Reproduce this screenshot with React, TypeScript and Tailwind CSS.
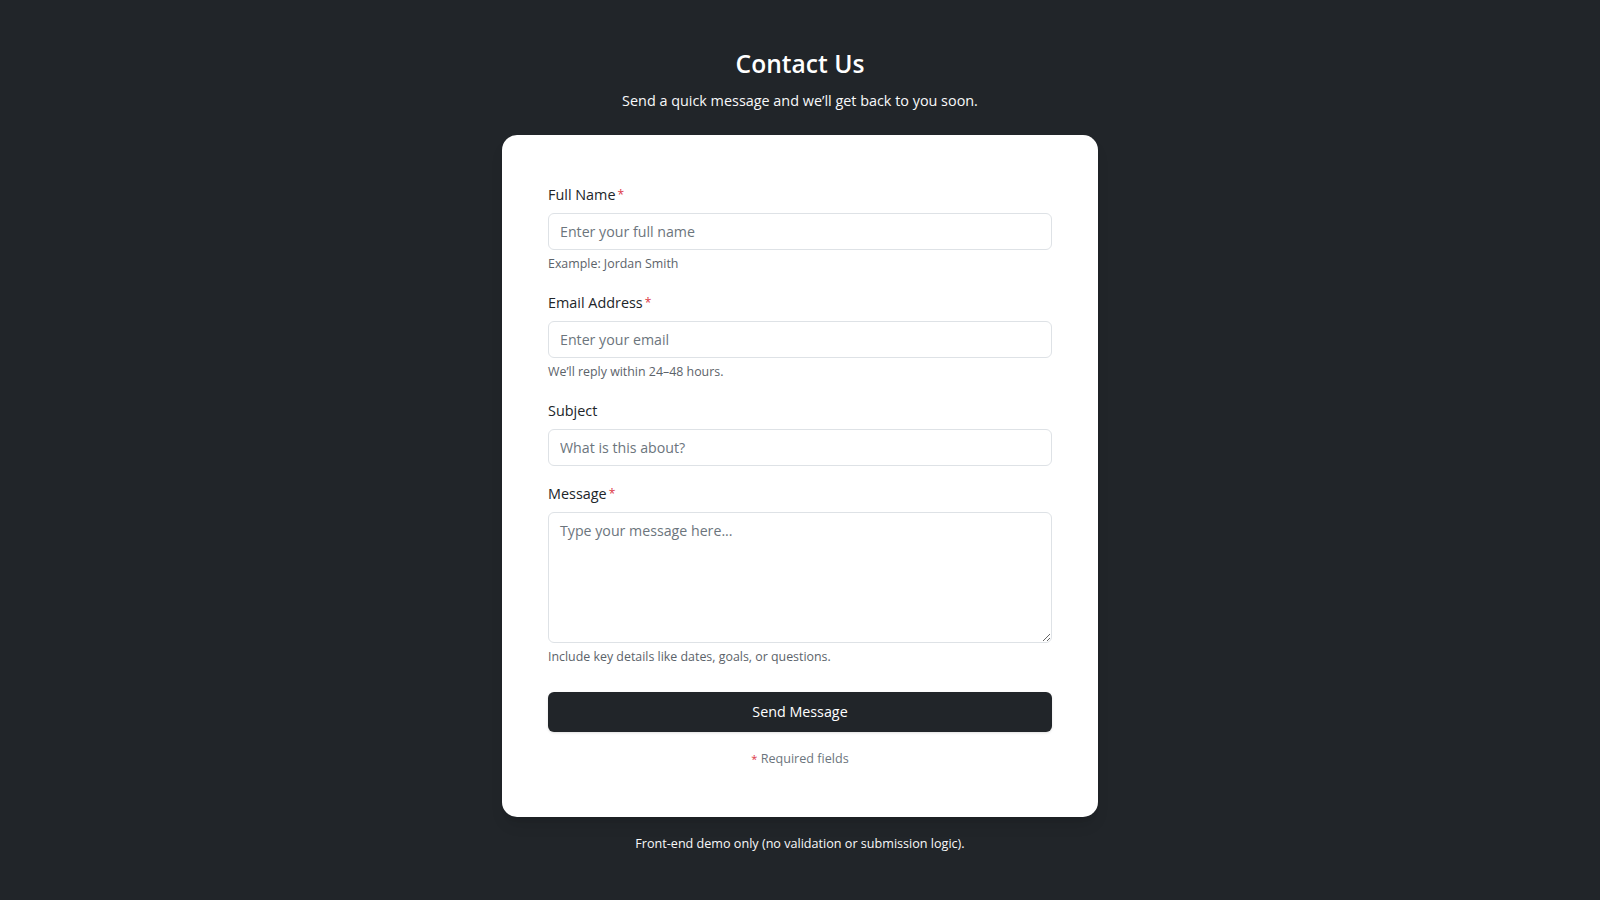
const fieldLabel = "block text-[14.4px] leading-[24px] text-[#212529]";
const fieldInput =
  "block w-full rounded-[6px] border border-[#dee2e6] bg-white px-[11px] text-[14.2px] text-[#212529] placeholder:text-[#6c757d] outline-none";
const helpText = "mt-1 text-[12.4px] leading-[20px] text-[#5c636a]";

function Required() {
  return <span className="ml-[2px] align-top text-[12px] text-[#dc3545]">*</span>;
}

export default function App() {
  return (
    <main
      className="min-h-screen bg-[#212529] px-4 pt-[47px] pb-10"
      style={{ fontFamily: '"Open Sans", "Noto Sans", sans-serif' }}
    >
      <div className="mx-auto w-[596px]">
        <h1 className="text-center text-[24.6px] font-semibold leading-[34px] text-white">Contact Us</h1>
        <p className="mt-[8px] text-center text-[14.4px] leading-[24px] text-[#f8f9fa]">
          Send a quick message and we’ll get back to you soon.
        </p>

        <div className="mt-[22px] rounded-[15px] bg-white px-[46px] pt-[48px] pb-[48px] shadow-lg">
          <form onSubmit={(e) => e.preventDefault()}>
            <div className="mb-[17px]">
              <label className={fieldLabel}>
                Full Name<Required />
              </label>
              <input type="text" placeholder="Enter your full name" className={`mt-[6px] h-[37px] ${fieldInput}`} />
              <p className={helpText}>Example: Jordan Smith</p>
            </div>

            <div className="mb-[17px]">
              <label className={fieldLabel}>
                Email Address<Required />
              </label>
              <input type="email" placeholder="Enter your email" className={`mt-[6px] h-[37px] ${fieldInput}`} />
              <p className={helpText}>We’ll reply within 24–48 hours.</p>
            </div>

            <div className="mb-4">
              <label className={fieldLabel}>Subject</label>
              <input type="text" placeholder="What is this about?" className={`mt-[6px] h-[37px] ${fieldInput}`} />
            </div>

            <div>
              <label className={fieldLabel}>
                Message<Required />
              </label>
              <textarea
                placeholder="Type your message here..."
                className={`mt-[6px] h-[131px] resize-y py-[7px] leading-[22px] ${fieldInput}`}
              />
              <p className={helpText}>Include key details like dates, goals, or questions.</p>
            </div>

            <button
              type="submit"
              className="mt-[25px] block h-[40px] w-full rounded-[6px] bg-[#212529] text-[14.3px] text-white shadow-sm"
            >
              Send Message
            </button>

            <p className="mt-4 text-center text-[12.6px] leading-[21px] text-[#6c757d]">
              <span className="align-top text-[11px] text-[#dc3545]">*</span> Required fields
            </p>
          </form>
        </div>

        <p className="mt-4 text-center text-[12.6px] leading-[21px] text-[#f8f9fa]">
          Front-end demo only (no validation or submission logic).
        </p>
      </div>
    </main>
  );
}
